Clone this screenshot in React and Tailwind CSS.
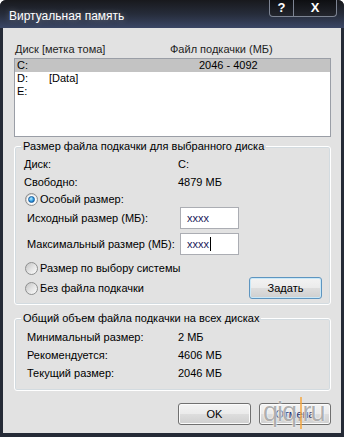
const Radio = ({ checked }) => (
  <span className="ml-[1px] flex h-[13px] w-[13px] shrink-0 items-center justify-center rounded-full border border-[#8e8f8f] bg-[linear-gradient(135deg,#c4c4c4,#e6e6e6_55%,#fbfbfb)]">
    {checked && (
      <span className="flex h-[9px] w-[9px] items-center justify-center rounded-full bg-white">
        <span className="h-[7px] w-[7px] rounded-full border border-[#1b5d9c] bg-[radial-gradient(circle_at_40%_35%,#b5ecff,#2f9be3_55%,#0e4f95)]" />
      </span>
    )}
  </span>
);

const WinButton = ({ children, focus, className = "" }) => (
  <div
    className={`flex h-[22px] items-center justify-center rounded-[3px] border bg-[linear-gradient(#f3f3f3,#ebebeb_48%,#dddddd_52%,#cfcfcf)] ${
      focus
        ? "border-[#5e95c0] shadow-[inset_0_0_0_1px_#c9e8f8]"
        : "border-[#707070] shadow-[inset_0_0_0_1px_#fbfbfb]"
    } ${className}`}
  >
    {children}
  </div>
);

const groupBox =
  "rounded-[3px] border border-white shadow-[inset_0_0_0_1px_#d3dbe0] pl-[9px] pr-[8px]";

export default function App() {
  return (
    <div className="flex h-[437px] w-[344px] flex-col whitespace-nowrap rounded-t-[6px] bg-[#252a36] font-['Liberation_Sans',Arial,sans-serif] text-[11px] leading-[14px] text-black">
      {/* title bar */}
      <div className="flex h-[28px] shrink-0 items-start justify-between rounded-t-[6px] bg-linear-to-b from-[#18191d] via-[#262c3a] to-[#3b4766]">
        <span className="pl-[9px] pt-[9px] text-[12px] text-white [text-shadow:0_0_6px_rgba(255,255,255,0.35)]">
          Виртуальная память
        </span>
        <div className="mr-[7px] flex h-[17px] overflow-hidden rounded-b-[4px] border-x border-b border-[#7d8493] bg-linear-to-b from-[#0e0f12] to-[#23262e]">
          <span className="flex w-[23px] items-center justify-center text-[13px] font-bold text-white">?</span>
          <span className="flex w-[43px] items-center justify-center border-l border-[#7d8493] text-[13px] font-bold text-white">
            X
          </span>
        </div>
      </div>

      {/* client area */}
      <div className="mx-[3px] mb-[4px] flex flex-1 flex-col bg-[#e2e2e2] pl-[11px] pr-[10px] pt-[14px] pb-[8px]">
        <div className="flex h-[14px] pl-[1px] text-[#1e1e1e]">
          <span className="w-[155px]">Диск [метка тома]</span>
          <span>Файл подкачки (МБ)</span>
        </div>

        <div className="mt-[2px] h-[79px] border border-[#9a9ea6] bg-white">
          {[
            ["C:", "", "2046 - 4092", true],
            ["D:", "[Data]", "", false],
            ["E:", "", "", false],
          ].map(([drive, label, size, sel]) => (
            <div key={drive} className={`flex h-[13px] pl-[2px] leading-[13px] ${sel ? "bg-[#c3c3c3]" : ""}`}>
              <span className="w-[32px]">{drive}</span>
              <span className="w-[150px]">{label}</span>
              <span>{size}</span>
            </div>
          ))}
        </div>

        {/* selected drive */}
        <fieldset className={`mt-[2px] pt-[2px] pb-[6px] ${groupBox}`}>
          <legend className="ml-[-3px] px-[2px] leading-[14px]">Размер файла подкачки для выбранного диска</legend>
          <div className="flex h-[18px] items-center">
            <span className="w-[154px]">Диск:</span>
            <span>C:</span>
          </div>
          <div className="flex h-[18px] items-center">
            <span className="w-[154px]">Свободно:</span>
            <span>4879 МБ</span>
          </div>
          <div className="flex h-[16px] items-center gap-[2px]">
            <Radio checked />
            <span>Особый размер:</span>
          </div>
          <div className="flex h-[22px] items-center pl-[3px]">
            <span className="w-[153px]">Исходный размер (МБ):</span>
            <div className="flex h-[22px] w-[59px] items-center border border-[#abadb3] bg-white pl-[6px] text-[#1a1a5a]">
              xxxx
            </div>
          </div>
          <div className="mt-[4px] flex h-[22px] items-center pl-[3px]">
            <span className="w-[153px]">Максимальный размер (МБ):</span>
            <div className="flex h-[22px] w-[59px] items-center border border-[#abadb3] bg-white pl-[6px] text-[#1a1a5a]">
              xxxx
              <span className="ml-[1px] h-[14px] w-[1px] bg-black" />
            </div>
          </div>
          <div className="mt-[4px] flex h-[18px] items-center gap-[2px]">
            <Radio />
            <span>Размер по выбору системы</span>
          </div>
          <div className="mt-[1px] flex h-[20px] items-center gap-[2px]">
            <Radio />
            <span>Без файла подкачки</span>
            <WinButton focus className="ml-auto h-[21px] w-[73px]">
              Задать
            </WinButton>
          </div>
        </fieldset>

        {/* all drives */}
        <fieldset className={`mt-[6px] pt-[3px] pb-[8px] ${groupBox}`}>
          <legend className="ml-[-3px] px-[2px] leading-[14px]">Общий объем файла подкачки на всех дисках</legend>
          {[
            ["Минимальный размер:", "2 МБ"],
            ["Рекомендуется:", "4606 МБ"],
            ["Текущий размер:", "2046 МБ"],
          ].map(([k, v]) => (
            <div key={k} className="flex h-[18px] items-center pl-[3px]">
              <span className="w-[151px]">{k}</span>
              <span>{v}</span>
            </div>
          ))}
        </fieldset>

        <div className="mt-[12px] flex justify-end gap-[8px]">
          <WinButton className="w-[73px]">OK</WinButton>
          <div className="relative w-[72px]">
            <WinButton className="w-[72px] text-[#1c2f6e]">Отмена</WinButton>
            {/* site watermark over the button */}
            <span className="pointer-events-none absolute left-[4px] top-[-6px] text-[27px] leading-[30px] tracking-[-1px] text-[rgba(95,95,95,0.5)] [text-shadow:0_0_1px_#fff,0_0_2px_#fff]">
              qiq.ru
            </span>
            <span className="pointer-events-none absolute left-[41px] top-[-6px] h-[32px] w-[2px] bg-[rgba(245,165,60,0.75)]" />
          </div>
        </div>
      </div>
    </div>
  );
}
